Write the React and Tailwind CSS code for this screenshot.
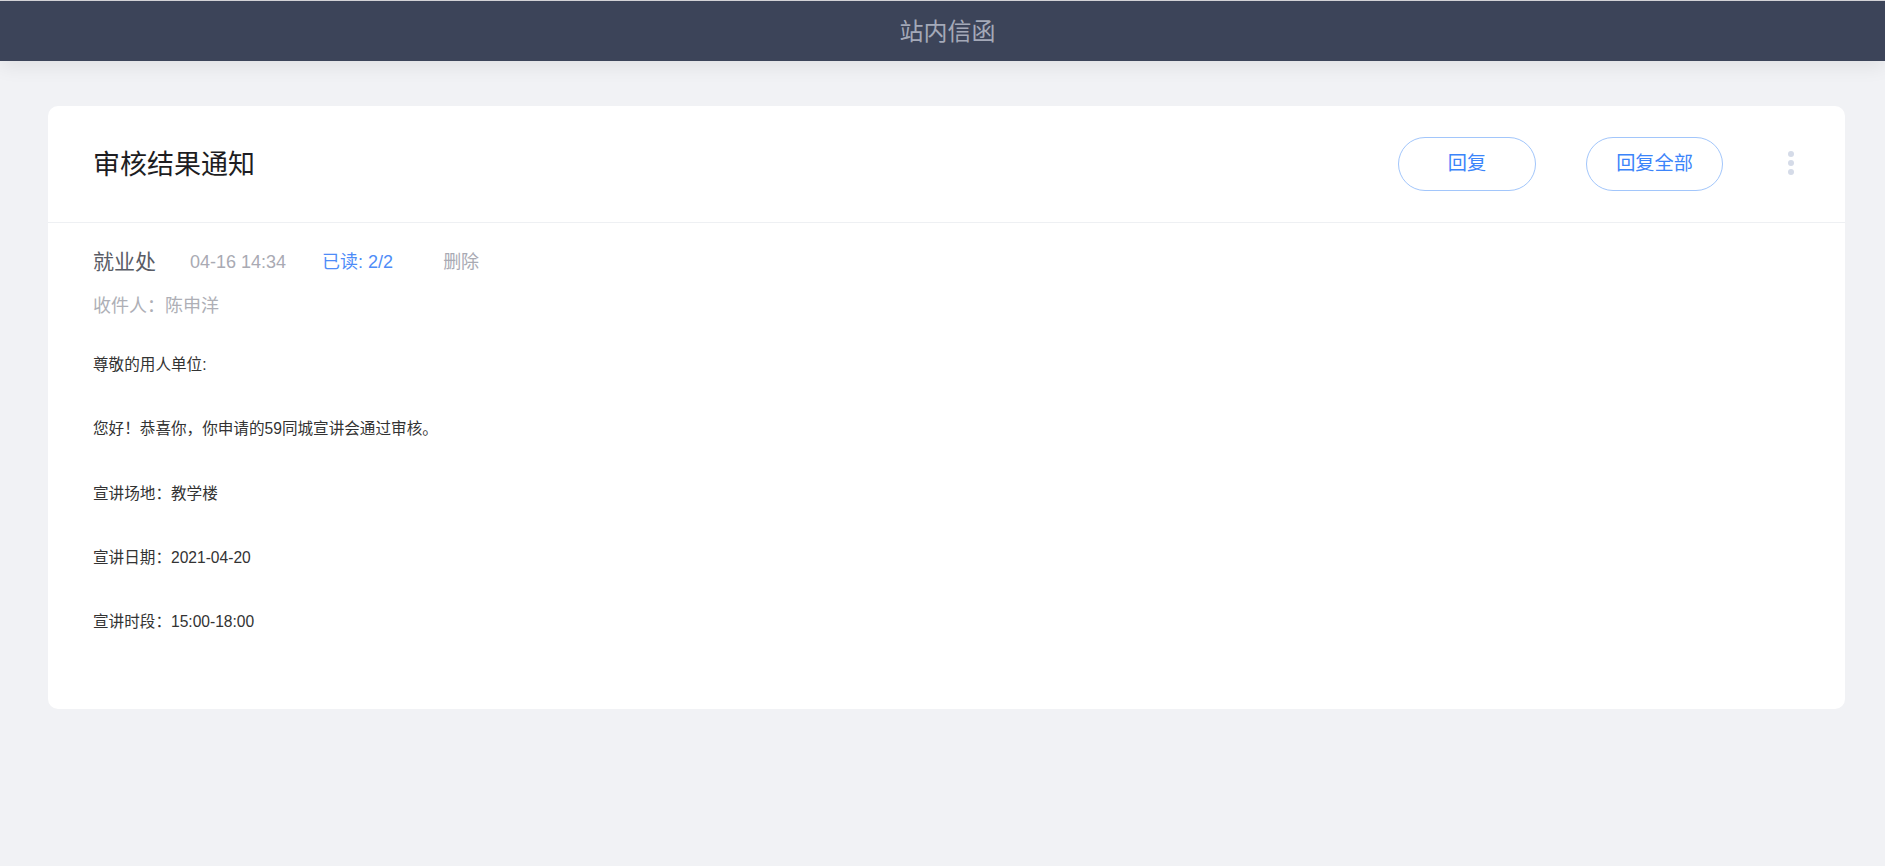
import React from "react";

const FONT = { fontFamily: '"Liberation Sans", "Noto Sans CJK SC", sans-serif' };

export default function App() {
  const lines = [
    "尊敬的用人单位:",
    "您好！恭喜你，你申请的59同城宣讲会通过审核。",
    "宣讲场地：教学楼",
    "宣讲日期：2021-04-20",
    "宣讲时段：15:00-18:00",
  ];
  return (
    <div className="min-h-[866px] bg-[#f1f2f5]" style={FONT}>
      <div className="h-[1px] bg-[#d6d6da]" />
      <div className="relative h-[60px] bg-[#3c4459] flex items-center justify-center pt-[2px] pl-[10px] shadow-[0_6px_18px_rgba(0,0,0,0.07)]">
        <span className="text-[24px] text-[#a4a9b8]">站内信函</span>
      </div>
      <div className="pt-[45px] pl-[48px] pr-[40px]">
        <div className="bg-white rounded-[10px]">
          <div className="h-[117px] flex items-center pl-[45px] pr-[51px] border-b border-[#eef0f3]">
            <h1 className="text-[27px] text-[#1d1d22] leading-none pt-[2px]">审核结果通知</h1>
            <div className="ml-auto flex items-center">
              <button className="w-[138px] h-[54px] rounded-full border border-[#a2c6fb] text-[#3b84fa] text-[19.2px] bg-white">
                回复
              </button>
              <button className="ml-[50px] w-[137px] h-[54px] rounded-full border border-[#a2c6fb] text-[#3b84fa] text-[19.2px] bg-white">
                回复全部
              </button>
              <div className="ml-[65px] flex flex-col gap-[3px] items-center -mt-[3px]">
                <span className="w-[6px] h-[6px] rounded-full bg-[#d5dbe8]" />
                <span className="w-[6px] h-[6px] rounded-full bg-[#d5dbe8]" />
                <span className="w-[6px] h-[6px] rounded-full bg-[#d5dbe8]" />
              </div>
            </div>
          </div>
          <div className="pl-[45px] pt-[24px] pb-[75px]">
            <div className="flex items-center h-[30px]">
              <span className="text-[21px] text-[#595c66]">就业处</span>
              <span className="ml-[34px] text-[18px] text-[#a9aab3]">04-16 14:34</span>
              <span className="ml-[36px] text-[18px] text-[#4e8cf8]">已读: 2/2</span>
              <span className="ml-[50px] text-[18px] text-[#a9aab3]">删除</span>
            </div>
            <div className="mt-[17px] h-[24px] leading-[24px] text-[18px] text-[#aeafb6]">
              收件人：陈申洋
            </div>
            <div className="mt-[35px] flex flex-col gap-[40.3px]">
              {lines.map((l, i) => (
                <p key={i} className="leading-[24px] text-[15.6px] text-[#333333]">
                  {l}
                </p>
              ))}
            </div>
          </div>
        </div>
      </div>
    </div>
  );
}
